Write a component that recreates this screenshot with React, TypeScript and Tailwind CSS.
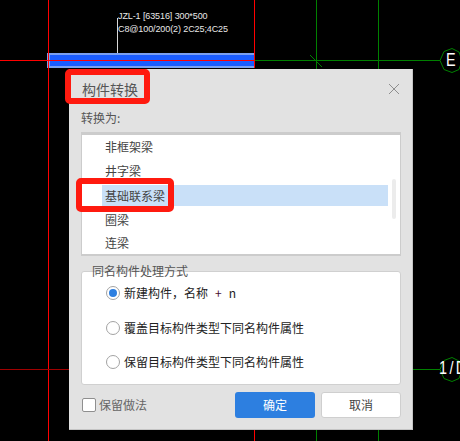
import React from "react";

const cjk = { fontFamily: '"Noto Sans CJK SC", "Microsoft YaHei", sans-serif' };
const latin = { fontFamily: '"Liberation Sans", sans-serif' };

function Drawing() {
  return (
    <svg className="absolute inset-0" width="460" height="441" viewBox="0 0 460 441" shapeRendering="crispEdges">
      <rect x="47" y="53" width="207" height="15" fill="#7a9ff0" />
      <rect x="50" y="55" width="204" height="11" fill="#1a5cff" />
      <path d="M48.5 0V441M254.5 0V68M254.5 430V441M0 60.5H254" stroke="#f00" fill="none" />
      <path d="M0 369.5H69" stroke="#a00000" fill="none" />
      <path d="M255 60.5H440M316.5 0V69M378.5 0V69M316.5 430V441M378.5 430V441M413 369.5H440" stroke="#008000" fill="none" />
      <path d="M117.5 18V53" stroke="#d8d8d8" strokeWidth="1" fill="none" />
      <g shapeRendering="auto" fill="none" stroke="#008000" strokeWidth="1">
        <path d="M310 55L322 67" />
        <path d="M440 60.5L444 51.5L452 48.5L459 52L462 60.5L459 69.5L452 72.5L444 69.5Z" />
        <path d="M440 369.5L444 360.5L452 357.5L459 361L462 369.5L459 378.5L452 381.5L444 378.5Z" />
      </g>
    </svg>
  );
}

function Radio({ checked, label }: { checked?: boolean; label: React.ReactNode }) {
  return (
    <div className="flex h-[14px] items-center">
      <span className="flex h-[14px] w-[14px] shrink-0 items-center justify-center rounded-full border border-[#a3a3a3] bg-white">
        {checked && <span className="h-[8px] w-[8px] rounded-full bg-[#2d7fe0]" />}
      </span>
      <span className="ml-[4px] whitespace-nowrap text-[12px] leading-[14px] text-[#222]">{label}</span>
    </div>
  );
}

export default function App() {
  return (
    <div className="relative h-[441px] w-[460px] overflow-hidden bg-black" style={cjk}>
      <Drawing />

      <div className="absolute left-[118px] top-[10px] whitespace-nowrap text-[9px] leading-[12.5px] tracking-[-0.1px] text-[#e8e8e8]" style={latin}>
        <div>JZL-1 [63516] 300*500</div>
        <div>C8@100/200(2) 2C25;4C25</div>
      </div>

      <div className="absolute left-[446px] top-[50px] origin-left scale-x-[0.8] text-[18px] leading-[21px] text-white" style={latin}>
        E
      </div>
      <div className="absolute left-[439px] top-[358px] origin-left scale-x-[0.8] whitespace-nowrap text-[18px] leading-[21px] tracking-[3px] text-white" style={latin}>
        1/D
      </div>

      <div className="absolute left-[69px] top-[69px] flex h-[361px] w-[344px] flex-col border-b border-r border-[#c4c4c4] bg-[#e2e2e2] px-[12px]">
        <div className="flex h-[38px] shrink-0 items-center justify-between pl-[1px] pt-[1px]">
          <span className="text-[14px] leading-[18px] text-[#555]">构件转换</span>
          <svg width="12" height="12" viewBox="0 0 12 12" fill="none" stroke="#8e8e8e" strokeWidth="1">
            <path d="M1 1L11 11M11 1L1 11" />
          </svg>
        </div>

        <div className="mt-[3px] h-[16px] text-[12px] leading-[16px] text-[#555]">转换为:</div>

        <div className="mt-[6px] flex h-[124px] w-[320px] shrink-0 overflow-hidden border-x border-b-2 border-t-[3px] border-[#cccccc] bg-white">
          <div className="ml-[20px] flex w-[286px] shrink-0 flex-col">
            <div className="flex h-[24px] shrink-0 items-center pl-[3px] text-[12px] text-[#444]">非框架梁</div>
            <div className="flex h-[24px] shrink-0 items-center pl-[3px] text-[12px] text-[#444]">井字梁</div>
            <div className="my-[2px] flex h-[21px] shrink-0 items-center bg-[#c9e0f8] pl-[3px] text-[12px] text-[#444]">基础联系梁</div>
            <div className="flex h-[24px] shrink-0 items-center pl-[3px] text-[12px] text-[#444]">圈梁</div>
            <div className="flex h-[22px] shrink-0 items-center pl-[3px] text-[12px] text-[#444]">连梁</div>
          </div>
          <div className="ml-[4px] mt-[44px] h-[40px] w-[4px] rounded-full bg-[#ececec]" />
        </div>

        <div className="relative mt-[15px] flex h-[114px] w-[320px] shrink-0 flex-col gap-[20.7px] rounded-[3px] border border-[#d0d0d0] bg-white pl-[24px] pt-[14px]">
          <span className="absolute left-[10px] top-[-8px] text-[12px] leading-[14px] text-[#555]">同名构件处理方式</span>
          <Radio
            checked
            label={
              <>
                新建构件，名称
                <span className="ml-[7px] text-[#4a1030]">+</span>
                <span className="ml-[7px] text-[#222]">n</span>
              </>
            }
          />
          <Radio label="覆盖目标构件类型下同名构件属性" />
          <Radio label="保留目标构件类型下同名构件属性" />
        </div>

        <div className="mt-[7px] flex h-[26px] w-[320px] shrink-0 items-center">
          <span className="ml-[1px] h-[14px] w-[14px] rounded-[2px] border border-[#8f8f8f] bg-white" />
          <span className="ml-[3px] text-[12px] text-[#666]">保留做法</span>
          <button className="ml-auto h-[26px] w-[80px] rounded-[3px] bg-[#2d7fe0] text-[12px] text-white">确定</button>
          <button className="ml-[6px] h-[26px] w-[80px] rounded-[3px] border border-[#cfcfcf] bg-white text-[12px] text-[#444]">取消</button>
        </div>
      </div>

      <div className="absolute left-[65px] top-[69px] h-[35px] w-[85px] rounded-[5px] border-[6px] border-[#ff1a0f]" />
      <div className="absolute left-[76px] top-[178px] h-[34px] w-[98px] rounded-[5px] border-[6px] border-[#ff1a0f]" />
    </div>
  );
}
